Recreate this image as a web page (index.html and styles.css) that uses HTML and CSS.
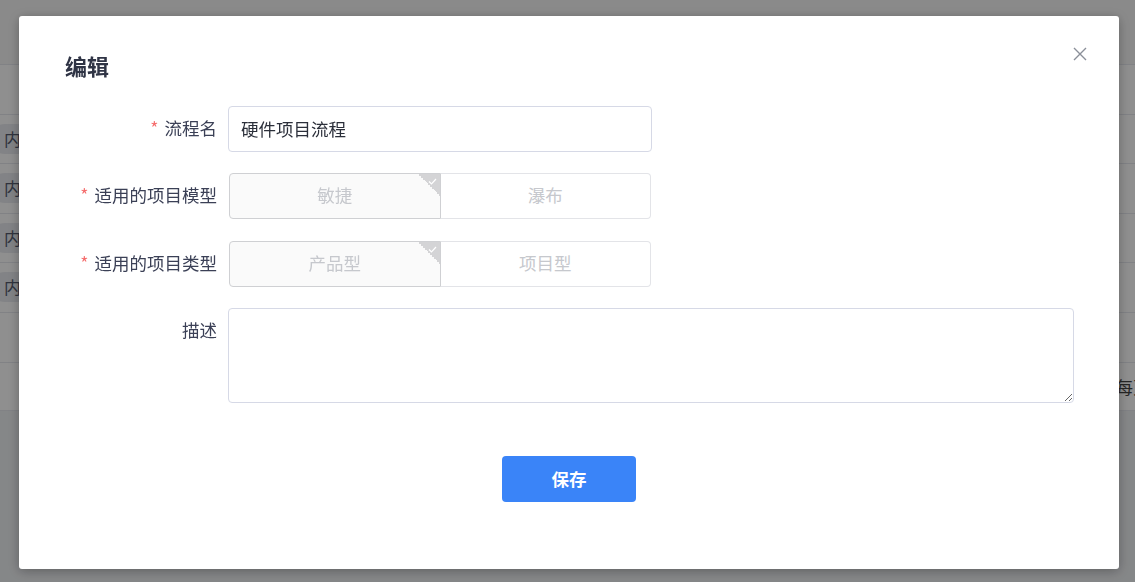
FILE: index.html
```html
<!DOCTYPE html>
<html lang="zh-CN">
<head>
    <meta charset="UTF-8">
    <meta name="viewport" content="width=device-width, initial-scale=1.0">
    <title>编辑流程</title>
    <link rel="stylesheet" href="styles.css">
</head>
<body>
    <div class="page">
        <div class="toolbar"></div>
        <div class="table">
            <div class="row head"></div>
            <div class="row"><span class="tag">内部</span></div>
            <div class="row"><span class="tag">内部</span></div>
            <div class="row"><span class="tag">内部</span></div>
            <div class="row"><span class="tag">内部</span></div>
            <div class="row"></div>
            <div class="row pager"><span class="pager-text">每页</span></div>
        </div>
    </div>

    <div class="overlay">
        <div class="dialog">
            <div class="dialog-header">
                <span class="dialog-title">编辑</span>
                <button class="close" aria-label="关闭">
                    <svg width="14" height="14" viewBox="0 0 14 14">
                        <path d="M1 1 L13 13 M13 1 L1 13" stroke="#8a8f99" stroke-width="1.4" fill="none"/>
                    </svg>
                </button>
            </div>

            <div class="form">
                <div class="form-item">
                    <label class="form-label required">流程名</label>
                    <input class="input" type="text" value="硬件项目流程">
                </div>

                <div class="form-item">
                    <label class="form-label required">适用的项目模型</label>
                    <div class="segment">
                        <div class="seg-option active">敏捷
                            <span class="corner">
                                <svg width="9" height="7" viewBox="0 0 9 7"><path d="M1 3.5 L3.5 6 L8 1" stroke="#fff" stroke-width="1.2" fill="none"/></svg>
                            </span>
                        </div>
                        <div class="seg-option">瀑布</div>
                    </div>
                </div>

                <div class="form-item">
                    <label class="form-label required">适用的项目类型</label>
                    <div class="segment">
                        <div class="seg-option active">产品型
                            <span class="corner">
                                <svg width="9" height="7" viewBox="0 0 9 7"><path d="M1 3.5 L3.5 6 L8 1" stroke="#fff" stroke-width="1.2" fill="none"/></svg>
                            </span>
                        </div>
                        <div class="seg-option">项目型</div>
                    </div>
                </div>

                <div class="form-item top">
                    <label class="form-label">描述</label>
                    <textarea class="textarea"></textarea>
                </div>
            </div>

            <div class="dialog-footer">
                <button class="btn-primary">保存</button>
            </div>
        </div>
    </div>
</body>
</html>
```

FILE: styles.css
```css
* {
    box-sizing: border-box;
}

body {
    margin: 0;
    font-family: "Noto Sans CJK SC", "Noto Sans", sans-serif;
    background: #eef0f3;
    overflow: hidden;
}

.page {
    height: 582px;
}

.toolbar {
    height: 64px;
    background: #f7f7f7;
}

.table {
    background: #fff;
}

.row {
    height: 49.6px;
    border-top: 1px solid #e6e8ee;
    position: relative;
}

.row.pager {
    border-bottom: 1px solid #e6e8ee;
}

.tag {
    display: inline-block;
    margin-top: 9px;
    margin-left: -10px;
    padding: 0 8px 0 14px;
    height: 30px;
    line-height: 30px;
    border-radius: 15px;
    background: #e8eaef;
    color: #555b6e;
    font-size: 17px;
}

.pager-text {
    position: absolute;
    left: 1116px;
    top: 11px;
    font-size: 17px;
    color: #444;
    white-space: nowrap;
}

.overlay {
    position: fixed;
    inset: 0;
    background: rgba(0, 0, 0, 0.44);
    padding: 16px 0 0 19px;
}

.dialog {
    width: 1100px;
    height: 553px;
    background: #fff;
    border-radius: 3px;
    box-shadow: 0 2px 12px rgba(0, 0, 0, 0.3);
    position: relative;
}

.dialog-header {
    padding: 34px 46px 0;
    height: 66px;
}

.dialog-title {
    font-size: 22px;
    line-height: 30px;
    font-weight: 700;
    color: #2f3445;
}

.close {
    position: absolute;
    top: 31px;
    right: 32px;
    width: 14px;
    height: 14px;
    padding: 0;
    border: none;
    background: none;
    cursor: pointer;
    display: flex;
}

.form {
    margin-top: 24px;
    padding: 0 45px 0 46px;
}

.form-item {
    display: flex;
    align-items: center;
    margin-bottom: 21px;
}

.form-item:nth-child(2) {
    margin-bottom: 22px;
}

.form-item.top {
    align-items: flex-start;
}

.form-label {
    width: 152px;
    margin-right: 11px;
    text-align: right;
    font-size: 17.5px;
    line-height: 44px;
    padding-bottom: 2px;
    color: #3b4056;
    flex-shrink: 0;
}

.form-label.required::before {
    content: "*";
    color: #f56c6c;
    margin-right: 6px;
}

.input {
    width: 424px;
    height: 46px;
    border: 1px solid #d6d9e6;
    border-radius: 4px;
    padding: 0 12px 1px;
    font-family: inherit;
    font-size: 17.5px;
    color: #2b2f3a;
    outline: none;
}

.segment {
    display: flex;
    width: 422px;
    height: 46px;
    margin-left: 1px;
}

.seg-option {
    flex: 1;
    position: relative;
    display: flex;
    align-items: center;
    justify-content: center;
    padding-bottom: 3px;
    font-size: 17.5px;
    color: #c6c8cd;
    border: 1px solid #e3e4e8;
    border-left: none;
    border-radius: 0 4px 4px 0;
    background: #fff;
}

.seg-option.active {
    background: #fafafa;
    border: 1px solid #cfd0d3;
    border-radius: 4px 0 0 4px;
    overflow: hidden;
}

.corner {
    position: absolute;
    top: 0;
    right: 0;
    width: 22px;
    height: 22px;
    background: linear-gradient(to bottom left, #d4d4d6 50%, transparent 50%);
}

.corner svg {
    position: absolute;
    top: 4px;
    right: 3px;
}

.textarea {
    display: block;
    width: 846px;
    height: 95px;
    border: 1px solid #d6d9e6;
    border-radius: 4px;
    font-family: inherit;
    font-size: 17.5px;
    padding: 8px 12px;
    resize: vertical;
    outline: none;
}

.dialog-footer {
    display: flex;
    justify-content: center;
    margin-top: 53px;
}

.btn-primary {
    width: 134px;
    height: 46px;
    padding: 0 0 2px;
    border: none;
    border-radius: 4px;
    background: #3a84f8;
    color: #fff;
    font-family: inherit;
    font-size: 17.5px;
    font-weight: 700;
    cursor: pointer;
}
```
